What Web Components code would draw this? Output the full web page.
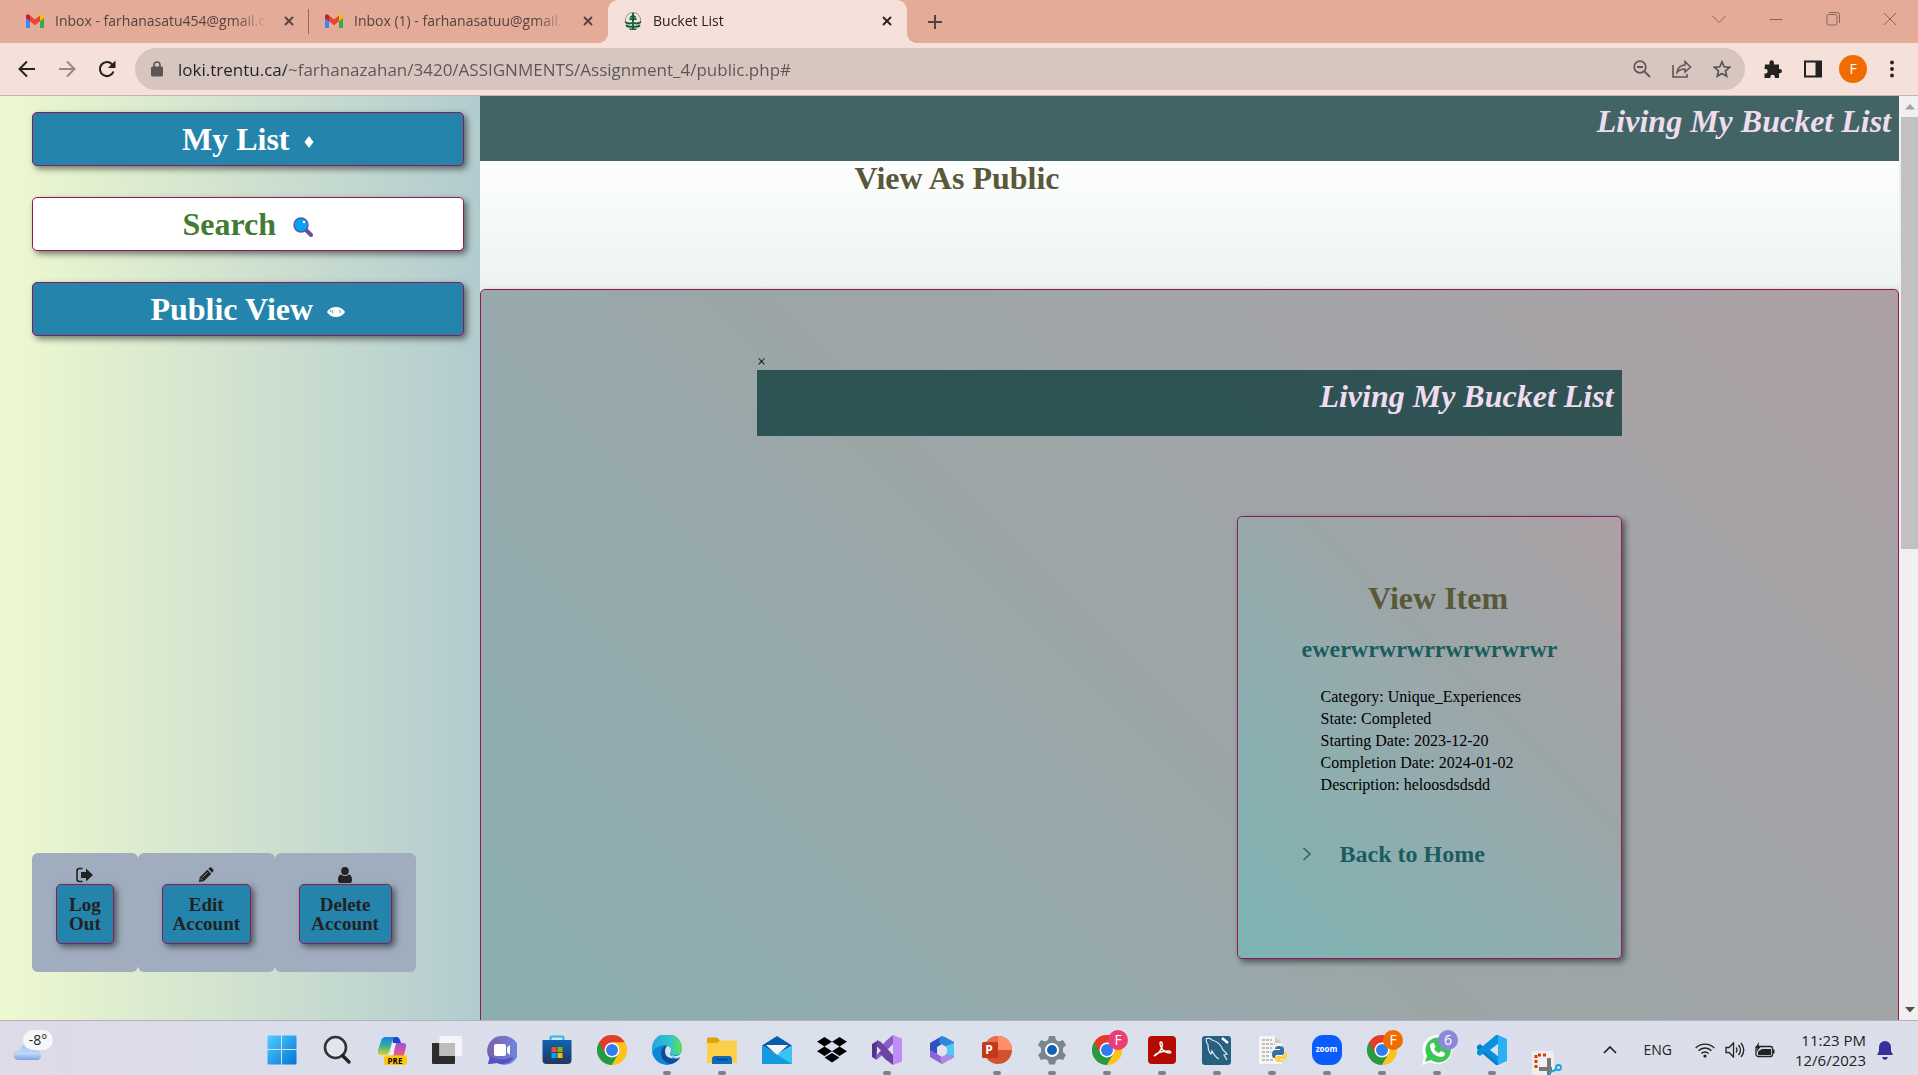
<!DOCTYPE html>
<html lang="en">
<head>
<meta charset="utf-8">
<title>Bucket List</title>
<style>
html,body{height:100%;margin:0}
body{display:flex;flex-direction:column;font-family:"Liberation Serif",serif;color:#000;overflow:hidden;--ui:"Open Sans","Noto Sans",sans-serif;--line:#8e1a57;--blue:#2484ab}
</style>
</head>
<body>
<browser-chrome></browser-chrome>
<bucket-page></bucket-page>
<task-bar></task-bar>
<script>
const chromeLogo = `<circle cx="15" cy="15" r="15" fill="#fcc31e"/><path d="M15 15L2 7.5A15 15 0 0 1 28 7.5H15z" fill="#e33b2e"/><path d="M2 7.5A15 15 0 0 0 15 30L21.5 18.8 15 15z" fill="#259b43"/><path d="M2 7.5L8.5 18.8 15 7.5z" fill="#e33b2e"/><path d="M15 30A15 15 0 0 0 28 7.5H15L21.5 18.8z" fill="#fcc31e"/><circle cx="15" cy="15" r="7.5" fill="#fff"/><circle cx="15" cy="15" r="6" fill="#2f7cf0"/>`;
const ICONS = {
  gmail: ['0 0 18 14', `<path d="M0 2v11q0 1 1 1h3V5z" fill="#4285f4"/><path d="M18 2v11q0 1-1 1h-3V5z" fill="#34a853"/><path d="M14 1.500l1-.8Q18-.7 18 2v2l-4 3.200z" fill="#fbbc04"/><path d="M4 1.500l-1-.8Q0-.7 0 2v2l4 3.200z" fill="#c5221f"/><path d="M4 1.500l5 4 5-4V7.200l-5 4-5-4z" fill="#ea4335"/>`],
  trent: ['0 0 20 20', `<ellipse cx="10" cy="9" rx="8.500" ry="8.500" fill="none" stroke="#6f9a80"/><path d="M10 1v19M6 8h8M7 6l3-2 3 2" stroke="#0f5a37" stroke-width="2" fill="none"/><path d="M1 10q5 3 8 1v2q-4 2-8-1zM19 10q-5 3-8 1v2q4 2 8-1zM2 14q4 2 7 1v2q-4 1-7-1zM18 14q-4 2-7 1v2q4 1 7-1zM5 18q3 1 4 0v2H7zM15 18q-3 1-4 0v2h2z" fill="#0f5a37"/>`],
  close: ['0 0 12 12', `<path d="M2 2l8 8M10 2l-8 8" stroke="currentColor" stroke-width="1.900" fill="none"/>`],
  plus: ['0 0 16 16', `<path d="M8 1v14M1 8h14" stroke="currentColor" stroke-width="2" fill="none"/>`],
  chev: ['0 0 14 14', `<path d="M.5 4L7 10.500 13.500 4" stroke="currentColor" fill="none"/>`],
  min: ['0 0 14 14', `<path d="M.5 7.500h13" stroke="currentColor" fill="none"/>`],
  max: ['0 0 14 14', `<rect x="1" y="2.500" width="10" height="10.500" rx="1.500" stroke="currentColor" fill="none"/><path d="M3 .5h8.500q2 0 2 2V11" stroke="currentColor" fill="none"/>`],
  exit: ['0 0 14 14', `<path d="M1 1l12 12M13 1L1 13" stroke="currentColor" fill="none"/>`],
  back: ['0 0 18 18', `<path d="M17 9H2M9 1.500L1.500 9 9 16.500" stroke="currentColor" stroke-width="2" fill="none"/>`],
  fwd: ['0 0 18 18', `<path d="M1 9h15M9 1.500L16.500 9 9 16.500" stroke="currentColor" stroke-width="2" fill="none"/>`],
  reload: ['0 0 18 18', `<path d="M15.500 11.500A7 7 0 1 1 14 4.200l1.500 1.500" stroke="currentColor" stroke-width="2.100" fill="none"/><path d="M17.500.5V8H10z" fill="currentColor"/>`],
  lock: ['0 0 12 16', `<rect y="5.500" width="12" height="10" rx="1.500" fill="currentColor"/><path d="M3 7V4a3 3 0 0 1 6 0v3" stroke="currentColor" stroke-width="1.600" fill="none"/>`],
  zoomout: ['0 0 18 18', `<circle cx="7" cy="7" r="5.800" stroke="currentColor" stroke-width="1.700" fill="none"/><path d="M4 7h6M11.500 11.500L17 17" stroke="currentColor" stroke-width="1.800"/>`],
  share: ['0 0 20 18', `<path d="M1 5v12h14v-3" stroke="currentColor" stroke-width="1.600" fill="none"/><path d="M5 12.500q1-7 8-7.500V1.500L18.500 7 13 12V9q-5 0-8 3.500z" stroke="currentColor" stroke-width="1.500" fill="none"/>`],
  star: ['0 0 18 18', `<path d="M9 1.800l2.200 5 5.400.5-4.100 3.600 1.200 5.300L9 13.400l-4.700 2.800 1.200-5.300L1.400 7.300l5.400-.5z" stroke="currentColor" stroke-width="1.700" fill="none"/>`],
  puzzle: ['0 0 18 18', `<path d="M1 4.500h4.500V2.500a2.200 2.200 0 0 1 4.400 0v2H15V9h.8a2.100 2.100 0 0 1 0 4.300H15V18h-4.200v-1a2.200 2.200 0 0 0-4.400 0v1H.5v-4.500h1a2.200 2.200 0 0 0 0-4.400h-1z" fill="currentColor"/>`],
  panel: ['0 0 18 18', `<rect x="1" y="1.500" width="16" height="15" stroke="currentColor" stroke-width="2" fill="none"/><path d="M11.500 1H18v16h-6.500z" fill="currentColor"/>`],
  dots: ['0 0 4 18', `<circle cx="2" cy="2.500" r="1.900"/><circle cx="2" cy="9" r="1.900"/><circle cx="2" cy="15.500" r="1.900"/>`],
  diamond: ['0 0 10 12', `<path d="M5 0l4.500 6L5 12 .5 6z" fill="#fff"/>`],
  lens: ['0 0 20 20', `<path d="M13 13l5 5" stroke="#60529c" stroke-width="4" stroke-linecap="round"/><circle cx="8" cy="8" r="7" fill="#04a4f2" stroke="#60529c" stroke-width="1.300"/><circle cx="11" cy="5" r="1.300" fill="#fff"/>`],
  eye: ['0 0 18 10', `<path d="M0 5Q3 0 9 0t9 5q-3 5-9 5T0 5z" fill="#fff"/><path d="M6 3Q4.500 5 6 6.500M12.500 3q1.500 1 .5 3M4 3q-1 1-1 2" stroke="#2484ab" stroke-width=".8" fill="none"/>`],
  logout: ['0 0 18 16', `<path d="M6.500 1.500h-3q-2.500 0-2.500 2.500v8q0 2.500 2.500 2.500h3" stroke="#222" stroke-width="1.600" fill="none"/><path d="M5 5h5V1.500L17 8l-7 6.500V11H5z" fill="#222"/>`],
  pencil: ['0 0 18 18', `<path d="M1 17l1-5.500L10.500 3 15 7.500 6.500 16zM11.500 2l2-1.500q1-.5 2 .5l1.500 1.500q1 1 .3 2L16 6.500z" fill="#222"/><path d="M3 13l2 2M5 12l6-6" stroke="#9fadbe" stroke-width=".9"/>`],
  person: ['0 0 14 16', `<ellipse cx="7" cy="4" rx="3.800" ry="4" fill="#222"/><path d="M3 7.500q4 3 8 0Q14 8 14 13q0 3-2 3H2q-2 0-2-3 0-5 3-5.500z" fill="#222"/>`],
  next: ['0 0 10 14', `<path d="M1.500 1L8 7l-6.500 6" stroke="#2a6466" stroke-width="1.600" fill="none"/>`],
  up: ['0 0 10 6', `<path d="M5 0l5 5.500H0z" fill="#a3a3a3"/>`],
  down: ['0 0 10 6', `<path d="M5 5.500L0 0h10z" fill="#505050"/>`],
  cloud: ['0 0 30 18', `<defs><linearGradient id="g" x2="0" y2="1"><stop stop-color="#9fc5f7"/><stop offset=".6" stop-color="#bcd7f8"/><stop offset="1" stop-color="#7da3e6"/></linearGradient></defs><path d="M5 18a5 5 0 0 1-1-9.800h3A8 8 0 0 1 21 5l3 3.500A5 5 0 0 1 25 18z" fill="url(#g)"/>`],
  win: ['0 0 30 30', `<defs><linearGradient id="g" x2="1" y2="1"><stop stop-color="#4fd0fb"/><stop offset="1" stop-color="#0473d6"/></linearGradient></defs><path d="M.5 1.500q0-1 1-1H14V14H.5zM15 .5h13.500q1 0 1 1V14H15zM.5 15H14v14.500H1.500q-1 0-1-1zM15 15h14.500v13.500q0 1-1 1H15z" fill="url(#g)"/>`],
  search: ['0 0 30 30', `<circle cx="13.500" cy="12.500" r="10.500" stroke="#333" stroke-width="2.600" fill="#e4e4ee"/><path d="M20.500 20.500L27 27" stroke="#222" stroke-width="3.400" stroke-linecap="round"/>`],
  copilot: ['0 0 30 30', `<defs><linearGradient id="g" x2="0" y2="1"><stop stop-color="#1b7df0"/><stop offset=".5" stop-color="#2fb39a"/><stop offset="1" stop-color="#e8d21c"/></linearGradient><linearGradient id="h" x2="0" y2="1"><stop stop-color="#a24be8"/><stop offset="1" stop-color="#f9665a"/></linearGradient></defs><path d="M15 2h5q2 0 3 3l1 3h-8z" fill="#1747c4"/><path d="M9 2h9q-2 1-3 5l-3 10q-1 3-4 3H4q-4 0-3-5L4 6q1-4 5-4z" fill="url(#g)"/><path d="M17 8h9q4 0 3 4l-2 8q-1 3-4 3h-9q2-1 3-4z" fill="url(#h)"/><path d="M16 8h3l-3 12h-4z" fill="#f3eefa"/><rect x="7" y="20.500" width="23" height="9.500" rx="2" fill="#ffc80a"/>`],
  taskview: ['0 0 30 30', `<path d="M0 8h23v20q0 1-1 1H1q-1 0-1-1z" fill="#2c2c2c"/><rect x="7.500" y="1" width="22.500" height="20" rx="1" fill="#f5f5f7"/><path d="M7.500 8H23v13H7.500z" fill="#bdbdbd"/>`],
  chat: ['0 0 30 30', `<defs><linearGradient id="g" x1="0" x2="1"><stop stop-color="#7d5fae"/><stop offset="1" stop-color="#6f86dd"/></linearGradient></defs><path d="M15 1a14.500 14.500 0 1 1-5 27L1 29l2-5A14.500 14.500 0 0 1 15 1z" fill="url(#g)"/><path d="M3 21q7 6 24 1a14 14 0 0 1-17 6l-9 1z" fill="#4f55c9"/><rect x="7" y="9" width="12" height="12" rx="2" fill="#fff"/><path d="M20 12.500l3-2.500v10l-3-2.500z" fill="#fff"/>`],
  store: ['0 0 30 30', `<defs><linearGradient id="g" x2="0" y2="1"><stop stop-color="#0e64b4"/><stop offset="1" stop-color="#23365c"/></linearGradient></defs><path d="M8.500 6V2.500q0-1 1-1h11q1 0 1 1V6" stroke="#21b8f1" stroke-width="2" fill="none"/><path d="M.5 5h29v20q0 4-4 4h-21q-4 0-4-4z" fill="url(#g)"/><path d="M9.500 12h5v5h-5z" fill="#f25022"/><path d="M15.500 12h5v5h-5z" fill="#7fba00"/><path d="M9.500 18h5v5h-5z" fill="#00a4ef"/><path d="M15.500 18h5v5h-5z" fill="#ffb900"/>`],
  chrome: ['0 0 30 30', chromeLogo],
  edge: ['0 0 30 30', `<defs><linearGradient id="g"><stop stop-color="#26a4e0"/><stop offset=".6" stop-color="#30c6c8"/><stop offset="1" stop-color="#65dd4f"/></linearGradient></defs><circle cx="15" cy="15" r="15" fill="#0f86d8"/><path d="M0 13A15 15 0 0 1 30 14q0 6-7 6-6 0-4-4 1-6-6-6Q5 10 0 17z" fill="url(#g)"/><path d="M14 11q-5 1-5 7 0 8 9 11 6-1 10-6-4 2-8 1-7-2-7-8 0-3 2-4z" fill="#0c4f96"/><path d="M15 11q4 0 4 4l-1 4q1 3 6 3l-5 1q-6-1-6-7 0-3 2-5zM30 15q-1 6-7 6l-3-1 2 3q4 1 6-1 0 2 2 1z" fill="#dce2ec"/>`],
  folder: ['0 0 30 30', `<path d="M0 3.500q0-1 1-1h9l3 3-2 4H0z" fill="#e2a20b"/><path d="M0 8h10l3-2.500h16q1 0 1 1V28H0z" fill="#fdcf48"/><path d="M5 29v-5q0-3 3-3h14q3 0 3 3v5z" fill="#0f6cbd"/><path d="M9 24.500h12" stroke="#073f7a" stroke-width="1.500"/>`],
  mail: ['0 0 30 30', `<path d="M0 10.500L15 1l15 9.500-15 9z" fill="#0a5cab"/><path d="M4 10h22L15 20z" fill="#f6f6f6"/><path d="M0 10.500L15 20l15-9.500V29H0z" fill="#36c5f4"/><path d="M0 10.500L30 29H0z" fill="#159ade"/>`],
  dropbox: ['0 0 30 30', `<path d="M7.500 2L15 6.700 7.500 11.500 0 6.700zM22.500 2L30 6.700l-7.500 4.800L15 6.700zM7.500 11.500L15 16.200 7.500 21 0 16.200zM22.500 11.500L30 16.200 22.500 21 15 16.200zM15 18l7.500 4.500L15 27.500l-7.500-5z" fill="#000"/>`],
  vs: ['0 0 30 30', `<path d="M0 9l5-3v19l-5-3z" fill="#52348b"/><path d="M21 0l9 3.500v23L21 30z" fill="#c08cf5"/><path d="M4 25l4-3L21 9V0l-7 6L4 17z" fill="#8a5cc9"/><path d="M5 5l4 2 12 13v10L13 24 4 14z" fill="#6d43a3"/><path d="M5 11.500l4 4-4 4z" fill="#e3dff0"/>`],
  office: ['0 0 30 30', `<path d="M15 1L3 8v8l7 3v-7l8-5z" fill="#2f4fc4"/><path d="M15 1l3 1 9 5v8l-7 3v-6l-8-4 1-6z" fill="#2f86dc"/><path d="M27 8v14l-4 3-4-4V11z" fill="#4ecbee"/><path d="M3 15v7l12 7 12-7v-1l-8-1-4 2-5-3z" fill="#8d63d8"/><path d="M15 29l12-7-6-3-8 4z" fill="#b08be6"/><path d="M15 10l5 3v5l-5 3-5-3v-5z" fill="#e2e3ee"/>`],
  ppt: ['0 0 30 30', `<circle cx="16" cy="15" r="14" fill="#d35230"/><path d="M16 1v14h14A14 14 0 0 0 16 1z" fill="#ff8f6b"/><path d="M2 15A14 14 0 0 1 16 1v14z" fill="#ed6c47"/><rect x="0" y="7" width="16" height="16" rx="1.500" fill="#c13b1b"/>`],
  gear: ['0 0 30 30', `<path d="M12 1h6l1 4 3 1.500 4-1.500 3 5-3 3v4l3 3-3 5-4-1-3 1.500-1 4h-6l-1-4L8 24l-4 1-3-5 3-3v-4l-3-3 3-5 4 1.500L11 5z" fill="#7b858c"/><circle cx="15" cy="15" r="7" fill="#fff"/><circle cx="15" cy="15" r="5" fill="#0f62b5"/>`],
  acrobat: ['0 0 30 30', `<rect x="1" y="1" width="28" height="28" rx="4" fill="#b30b00"/><path d="M7 21q6-3 8-9 1-5-1-5t0 5q3 6 9 6 2-1-1-2-8 0-13 3-2 2-2 2z" stroke="#fff" stroke-width="1.400" fill="none"/>`],
  mysql: ['0 0 30 30', `<rect x="0" y="1" width="29" height="29" rx="3" fill="#28607f"/><path d="M4 4q3-2 6 1 8 2 11 10l4 4-3 1 3 5M4 4q0 3 2 6 0 6 3 9l1-3q3 6 7 8" stroke="#dfeaf0" stroke-width="1.200" fill="none"/><path d="M20 3l6 5" stroke="#fff" stroke-width="2.500"/>`],
  python: ['0 0 30 30', `<path d="M2 1h16l7 7v21H2z" fill="#f5f5f3"/><path d="M18 1v7h7z" fill="#ccc"/><path d="M5 5h10M5 9h13M5 13h10M5 17h9M5 21h8M5 25h11" stroke="#aaa" stroke-width="1.500" stroke-dasharray="3 1"/><path d="M22 11q5 0 5 3v4q0 2-3 2h-4q-2 0-2 3h-1q-2 0-2-4t4-4h4v-1h-5q0-3 4-3z" fill="#3670a0"/><path d="M23 27q-5 0-5-3v-1q0-2 3-2h4q3 0 3-4 3 0 3 3 0 4-4 4h-4v1h4q0 2-4 2z" fill="#ffd040"/>`],
  zoom: ['0 0 30 30', `<rect width="30" height="30" rx="11" fill="#0b5cff"/>`],
  whatsapp: ['0 0 30 30', `<path d="M15 0a14.500 14.500 0 1 1-7 27L0 30l2-9A14.500 14.500 0 0 1 15 0z" fill="#fff"/><path d="M15 2.500A12.500 12.500 0 1 1 9 25l-6 2 2-6A12.500 12.500 0 0 1 15 2.500z" fill="#3bc656"/><path d="M10 8l2 0 1.500 4-1.500 2q2 3 5 4l2-2 4 2q0 4-4 4Q9 21 8 11q0-2 2-3z" fill="#fff"/>`],
  vscode: ['0 0 30 30', `<path d="M22 0L8 13 3 9 0 11v3l19 16h3z" fill="#0a7bc8"/><path d="M22 30L8 17l-5 4-3-2v-3L19 0h3z" fill="#0a8fdd"/><path d="M22 8v14l-9-7z" fill="#dde1ee"/><path d="M21 0l9 4v22l-9 4z" fill="#2bb0f6"/>`],
  snip: ['0 0 30 24', `<rect width="22" height="24" rx="2" fill="#eee"/><path d="M4 17V4h12" stroke="#d83b01" stroke-width="3" stroke-dasharray="3 2" fill="none"/><path d="M17 7v17M7 18h13" stroke="#777" stroke-width="4"/><circle cx="26.500" cy="16.500" r="2.500" stroke="#1ba0e2" stroke-width="1.800" fill="none"/><path d="M17 22l8-4" stroke="#1ba0e2" stroke-width="2"/>`],
  caret: ['0 0 14 8', `<path d="M1 7l6-6 6 6" stroke="#222" stroke-width="1.700" fill="none"/>`],
  wifi: ['0 0 20 16', `<path d="M.7 6a13 13 0 0 1 18.600 0M3.500 8.800a9 9 0 0 1 13 0M6.300 11.500a5.300 5.300 0 0 1 7.400 0" stroke="#222" stroke-width="1.300" fill="none"/><circle cx="10" cy="14" r="1.600" fill="#222"/>`],
  sound: ['0 0 20 16', `<path d="M1 5.500h3L8.500 1v14L4 10.500H1z" stroke="#222" stroke-width="1.300" fill="none"/><path d="M11 5.500q2 2.500 0 5M13.500 3q4 5 0 10M16 1q5.500 7 0 14" stroke="#222" stroke-width="1.300" fill="none"/>`],
  battery: ['0 0 20 16', `<rect x="1" y="4.500" width="16.500" height="10" rx="2" stroke="#222" stroke-width="1.300" fill="none"/><path d="M3 13V9.500L7 7h9v6zM18 7.500h1.500v4H18z" fill="#222"/><path d="M4 0L0 6h2.500L1.500 10 6 4.500H3.500z" fill="#222"/>`],
  bell: ['0 0 16 20', `<path d="M0 15l2-4V7a6 6 0 0 1 12 0v4l2 4zM5 17h6q-1 3-3 3t-3-3z" fill="#37309c"/>`]
};
const define = (name, css, html) => customElements.define(name, class extends HTMLElement {
  connectedCallback() {
    if (this.shadowRoot) return;
    const root = this.attachShadow({ mode: 'open' });
    root.innerHTML = `<style>*{box-sizing:border-box}:host{box-sizing:border-box}button{font:inherit;color:inherit;background:none;border:0;padding:0;margin:0;display:grid;place-items:center}${css}</style>` + (typeof html === 'function' ? html(this) : html);
  }
});
define('ui-icon', `:host{display:block;flex:none}svg{display:block}`, el => {
  const [box, art] = ICONS[el.getAttribute('name')];
  const w = +el.getAttribute('w'), h = +(el.getAttribute('h') || w);
  return `<svg width="${w}" height="${h}" viewBox="${box}" aria-hidden="true">${art}</svg>`;
});

define('browser-tab', `
:host{display:flex;align-items:center;flex:0 1 299px;height:43px;padding:0 10px 2px 16px;gap:11px;color:#54443f;font:14px/20px var(--ui);position:relative}
:host([active]){background:#f6e1da;color:#26201f;border-radius:10px 10px 0 0}
:host([active])::before,:host([active])::after{content:"";position:absolute;bottom:0;width:10px;height:10px}
:host([active])::before{right:100%;background:radial-gradient(circle at 0 0,transparent 10px,#f6e1da 10px)}
:host([active])::after{left:100%;background:radial-gradient(circle at 100% 0,transparent 10px,#f6e1da 10px)}
:host([divided]){background:linear-gradient(#8c6b60,#8c6b60) right 50%/1px 25px no-repeat}
.t{flex:1;min-width:0;overflow:hidden;white-space:nowrap;mask-image:linear-gradient(to left,transparent,#000 32px)}
button{width:20px;height:20px}`,
  el => `<ui-icon name="${el.getAttribute('icon')}" w="18" h="${el.hasAttribute('active') ? 18 : 14}"></ui-icon><span class="t"><slot></slot></span><button aria-label="Close tab"><ui-icon name="close" w="12"></ui-icon></button>`);

define('browser-chrome', `
:host{display:block;flex:none;font-family:var(--ui)}
.tabs{display:flex;background:#e4ab99;height:43px;padding-left:10px;color:#54443f}
.new{width:28px;margin-left:14px}
.win{display:flex;margin-left:auto;height:37px;color:#86655b}.win button{width:57px}
.bar{display:flex;align-items:center;height:53px;background:#f6e1da;border-bottom:1px solid #c8b3ac;padding:5px 16px 5px 7px;color:#222}
.nav{width:40px;height:40px}.off{color:#978883}
form{display:flex;align-items:center;flex:1;height:42px;border-radius:21px;background:#d7c6bf;margin:0 8px;padding:0 3px 0 16px;color:#5b5554}
input{flex:1;min-width:0;border:0;outline:0;padding:1px 0 0;margin-left:15px;font:17px/24px var(--ui);color:#5b5554;background:linear-gradient(90deg,#222 108px,#5b5554 108px);-webkit-background-clip:text;background-clip:text;-webkit-text-fill-color:transparent}
form button{width:40px;height:40px}
.ext{width:40px;height:40px}.av{width:28px;height:28px;border-radius:50%;background:#f06c00;color:#fff;font-size:14px;line-height:28px;margin:0 6px}
.dots{width:20px;height:40px;margin-left:9px;fill:#222}`,
`<div class="tabs"><browser-tab icon="gmail" divided>Inbox - farhanasatu454@gmail.c</browser-tab><browser-tab icon="gmail">Inbox (1) - farhanasatuu@gmail.</browser-tab><browser-tab icon="trent" active>Bucket List</browser-tab><button class="new" aria-label="New tab"><ui-icon name="plus" w="16"></ui-icon></button>
<div class="win"><button aria-label="Search tabs"><ui-icon name="chev" w="14"></ui-icon></button><button aria-label="Minimize"><ui-icon name="min" w="14"></ui-icon></button><button aria-label="Restore"><ui-icon name="max" w="14"></ui-icon></button><button aria-label="Close"><ui-icon name="exit" w="14"></ui-icon></button></div></div>
<div class="bar"><button class="nav" aria-label="Back"><ui-icon name="back" w="18"></ui-icon></button><button class="nav off" aria-label="Forward"><ui-icon name="fwd" w="18"></ui-icon></button><button class="nav" aria-label="Reload"><ui-icon name="reload" w="18"></ui-icon></button>
<form><ui-icon name="lock" w="12" h="16"></ui-icon><input aria-label="Address" value="loki.trentu.ca/~farhanazahan/3420/ASSIGNMENTS/Assignment_4/public.php#"><button type="button" aria-label="Zoom"><ui-icon name="zoomout" w="18"></ui-icon></button><button type="button" aria-label="Share"><ui-icon name="share" w="20" h="18"></ui-icon></button><button type="button" aria-label="Bookmark"><ui-icon name="star" w="18"></ui-icon></button></form>
<button class="ext" aria-label="Extensions"><ui-icon name="puzzle" w="18"></ui-icon></button><button class="ext" aria-label="Side panel"><ui-icon name="panel" w="18"></ui-icon></button><button class="av" aria-label="Profile">F</button><button class="dots" aria-label="Menu"><ui-icon name="dots" w="4" h="18"></ui-icon></button></div>`);

define('menu-button', `
:host{display:block}
button{display:flex;align-items:center;justify-content:center;width:100%;padding:8px;border:1px solid var(--line);border-radius:5px;background:var(--blue);color:#fff;font-size:32px;line-height:36px;font-weight:bold;box-shadow:3px 3px 6px rgba(0,0,0,.5);gap:14px}
:host([plain]) button{background:#fff;color:#437b35;gap:17px}
ui-icon{padding-top:6px}`,
  el => `<button><slot></slot><ui-icon name="${el.getAttribute('icon')}" w="${el.getAttribute('w')}" h="${el.getAttribute('h')}"></ui-icon></button>`);

define('account-card', `
:host{display:flex;flex-direction:column;align-items:center;background:#9fadbe;border-radius:6px;padding:12px 24px 28px}
ui-icon{height:19px;display:grid;place-items:center}
button{width:100%;padding:10px 8px;border:1px solid var(--line);border-radius:5px;background:var(--blue);color:#222;font-size:19px;line-height:19px;font-weight:bold;box-shadow:3px 3px 6px rgba(0,0,0,.5)}
`, el => `<ui-icon name="${el.getAttribute('icon')}" w="${el.getAttribute('w')}" h="16"></ui-icon><button><slot></slot></button>`);

define('side-menu', `
:host{display:flex;flex-direction:column;justify-content:space-between;background:linear-gradient(90deg,#edf9d0,#d0e2cf 50%,#b2cbcf);padding:16px 16px 48px 32px}
nav{display:grid;gap:31px}
.acc{display:grid;grid-template-columns:106fr 137fr 141fr;margin-right:48px}`,
`<nav><menu-button icon="diamond" w="10" h="12">My List</menu-button><menu-button plain icon="lens" w="20" h="20">Search</menu-button><menu-button icon="eye" w="18" h="10">Public View</menu-button></nav>
<div class="acc"><account-card icon="logout" w="18">Log<br>Out</account-card><account-card icon="pencil" w="16">Edit<br>Account</account-card><account-card icon="person" w="14">Delete<br>Account</account-card></div>`);

define('page-banner', `:host{display:block;background:rgba(0,50,50,.71);padding:8px 8px 22px;text-align:right}
h1{margin:0;font-size:32px;line-height:36px;font-style:italic;color:#eedcef}`, `<h1><slot></slot></h1>`);

define('item-card', `
:host{display:block;width:385px;border:1px solid var(--line);border-radius:5px;background:linear-gradient(45deg,#7cb4b2,#98a9ad 54%,#9ba6a7 60%,#a3a4a8 80%,#ada0a4);box-shadow:3px 3px 6px rgba(0,0,0,.5);padding:63px 64px 90px}
h2{margin:0 0 19px;padding-left:18px;text-align:center;font-size:32px;line-height:36px;color:#5a5838}
h3{margin:0 0 23px;font-size:24px;line-height:28px;color:#1a5d5f}
ul{margin:0 0 44px;padding:0 0 0 19px;list-style:none;font-size:16px;line-height:22px}
a{display:flex;align-items:center;gap:28px;font-size:24px;line-height:28px;font-weight:bold;color:#1a5d5f;text-decoration:none}`,
`<h2>View Item</h2><h3>ewerwrwrwrrwrwrwrwr</h3><ul><li>Category: Unique_Experiences</li><li>State: Completed</li><li>Starting Date: 2023-12-20</li><li>Completion Date: 2024-01-02</li><li>Description: heloosdsdsdd</li></ul><a href="#"><ui-icon name="next" w="10" h="14"></ui-icon>Back to Home</a>`);

define('bucket-page', `
:host{display:flex;flex:1;min-height:0;overflow:hidden}
side-menu{flex:0 0 25%}
main{flex:1;min-width:0;display:flex;flex-direction:column;background:linear-gradient(#fdfffe 65px,#edf2f3 193px)}
main>page-banner{background:#426465;padding-top:7px}
.title{height:128px;flex:none}
h2{margin:0;width:67%;padding-left:4px;text-align:center;font-size:32px;line-height:34px;color:#5a5838}
.wrap{flex:1;min-height:0;overflow:hidden;margin-top:-12px;padding-top:12px}
.panel{border:1px solid var(--line);border-radius:5px;min-height:1600px;background:linear-gradient(45deg,#7cb4b2,#98a9ad 54%,#9ba6a7 60%,#a3a4a8 80%,#ada0a4);box-shadow:3px 3px 6px rgba(0,0,0,.5)}
.modal{width:61%;margin:64px auto 0;display:flex;flex-direction:column}
.modal item-card{align-self:flex-end;margin-top:80px}
.x{font-size:16px;line-height:16px;align-self:flex-start}
aside{flex:0 0 19px;background:#f0f0f0;display:flex;flex-direction:column;padding-left:2px}
.arr{height:21px;display:grid;place-items:center}.track{flex:1}.thumb{height:49%;background:#c1c1c1}`,
`<side-menu></side-menu><main><page-banner>Living My Bucket List</page-banner><div class="title"><h2>View As Public</h2></div><div class="wrap"><div class="panel"><div class="modal"><button class="x" aria-label="Close">×</button><page-banner>Living My Bucket List</page-banner><item-card></item-card></div></div></div></main>
<aside aria-hidden="true"><div class="arr"><ui-icon name="up" w="10" h="6"></ui-icon></div><div class="track"><div class="thumb"></div></div><div class="arr"><ui-icon name="down" w="10" h="6"></ui-icon></div></aside>`);

define('task-icon', `
:host{display:block;width:55px;height:54px;position:relative}
button{width:100%;height:100%;padding-top:4px}
:host([name=snip]) button{padding-top:0;place-items:end center}
:host([open])::after{content:"";position:absolute;left:24px;bottom:0;width:8px;height:4px;border-radius:2px;background:#7e808c}
:host([name=snip][open])::after{display:none}
.b{position:absolute;left:29px;top:9px;width:20px;height:20px;border-radius:50%;background:var(--badge);color:#fff;font:14px/20px var(--ui);text-align:center}
.over{position:absolute;text-align:center}
.pre{left:20px;width:22px;top:35px;font:bold 8px/10px var(--ui);color:#000}
.zm{left:0;right:0;top:20px;font:bold 8px/16px var(--ui);color:#fff}
.p{left:12px;width:16px;top:21px;font:bold 12px/16px var(--ui);color:#fff}`,
  el => { const n = el.getAttribute('name'), b = el.getAttribute('badge');
    return `<button aria-label="${n}"><ui-icon name="${n}" w="30" h="${n === 'snip' ? 24 : 30}"></ui-icon></button>${b ? `<span class="b">${b}</span>` : ''}${n === 'copilot' ? '<span class="over pre">PRE</span>' : n === 'zoom' ? '<span class="over zm">zoom</span>' : n === 'ppt' ? '<span class="over p">P</span>' : ''}`; });

define('task-bar', `
:host{display:grid;grid-template-columns:254px auto 1fr;flex:none;height:55px;border-top:1px solid #b0b1bb;background:linear-gradient(90deg,#dfdae7,#dadeea 15%,#dae0ec 50%,#dcdeea);font:15px/20px var(--ui);color:#222}
.weather{position:relative;padding:21px 0 0 13px}
.pill{position:absolute;left:23px;top:9px;width:30px;height:20px;border-radius:10px;background:#f7f7fa;text-align:center;font-size:14px}
.apps{display:flex}
.tray{display:flex;align-items:center;justify-content:flex-end;padding:3px 25px 0 0}
.lang{margin:0 23px 0 26px;font-size:14px}.sys{display:flex;gap:10px;margin-right:20px}
time{text-align:right;margin-right:11px}`,
`<div class="weather"><ui-icon name="cloud" w="30" h="18"></ui-icon><span class="pill">-8°</span></div>
<div class="apps"><task-icon name="win"></task-icon><task-icon name="search"></task-icon><task-icon name="copilot"></task-icon><task-icon name="taskview"></task-icon><task-icon name="chat"></task-icon><task-icon name="store"></task-icon><task-icon name="chrome"></task-icon><task-icon name="edge" open></task-icon><task-icon name="folder" open></task-icon><task-icon name="mail"></task-icon><task-icon name="dropbox"></task-icon><task-icon name="vs" open></task-icon><task-icon name="office"></task-icon><task-icon name="ppt" open></task-icon><task-icon name="gear" open></task-icon><task-icon name="chrome" open badge="F" style="--badge:#ea3d78"></task-icon><task-icon name="acrobat" open></task-icon><task-icon name="mysql" open></task-icon><task-icon name="python" open></task-icon><task-icon name="zoom" open></task-icon><task-icon name="chrome" open badge="F" style="--badge:#ef6c00"></task-icon><task-icon name="whatsapp" open badge="6" style="--badge:#8d88d8"></task-icon><task-icon name="vscode" open></task-icon><task-icon name="snip" open></task-icon></div>
<div class="tray"><ui-icon name="caret" w="14" h="8"></ui-icon><span class="lang">ENG</span><div class="sys"><ui-icon name="wifi" w="20" h="16"></ui-icon><ui-icon name="sound" w="20" h="16"></ui-icon><ui-icon name="battery" w="20" h="16"></ui-icon></div><time>11:23 PM<br>12/6/2023</time><ui-icon name="bell" w="16" h="20"></ui-icon></div>`);
</script>
</body>
</html>
